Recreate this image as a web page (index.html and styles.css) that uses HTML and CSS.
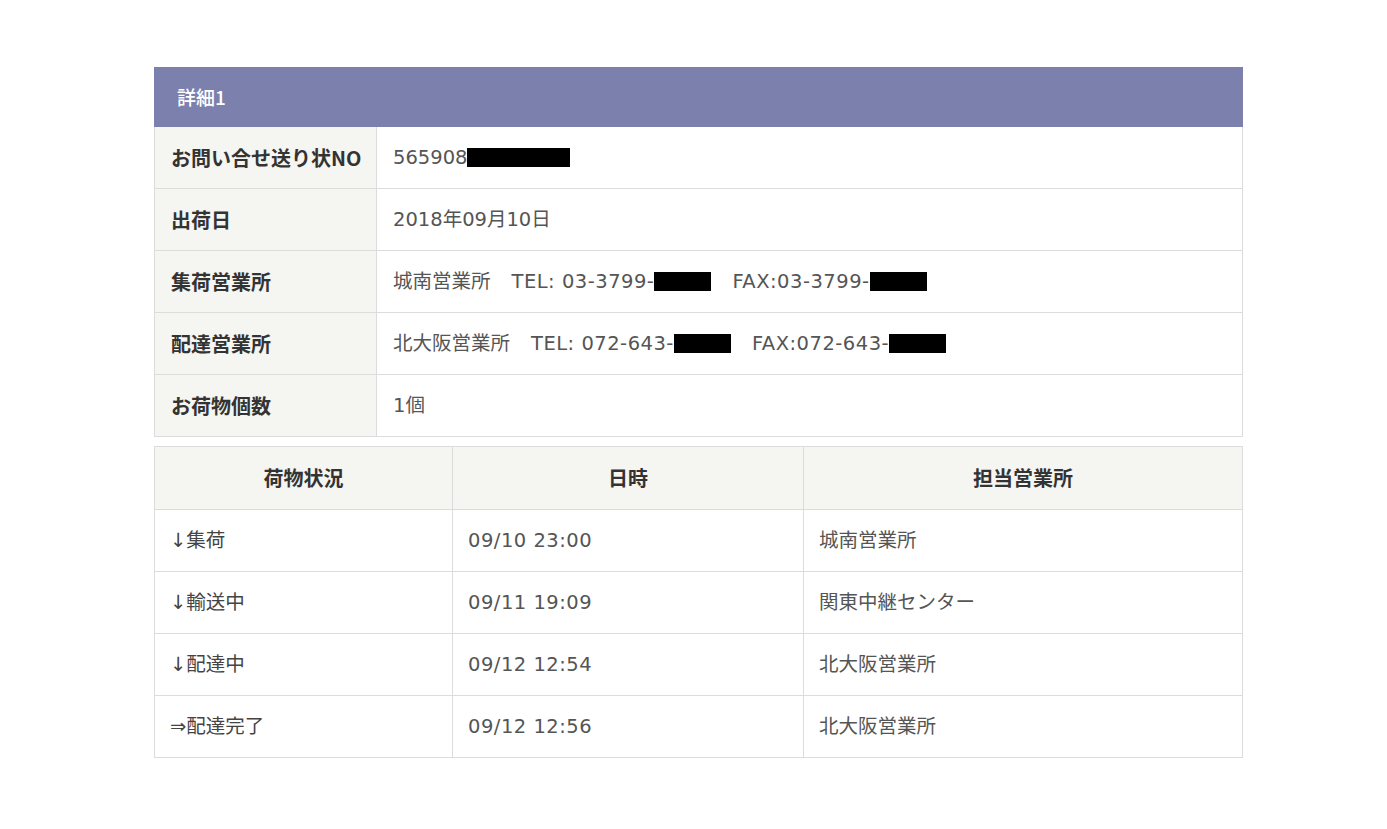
FILE: index.html
```html
<!DOCTYPE html>
<html lang="ja">
<head>
<meta charset="utf-8">
<title>詳細1</title>
<link rel="stylesheet" href="styles.css">
</head>
<body>
<div class="page">
  <table class="detail">
    <colgroup><col class="c-label"><col></colgroup>
    <thead>
      <tr><th colspan="2" class="title">詳細1</th></tr>
    </thead>
    <tbody>
      <tr><th>お問い合せ送り状NO</th><td>565908<span class="redact r1"></span></td></tr>
      <tr><th>出荷日</th><td>2018年09月10日</td></tr>
      <tr><th>集荷営業所</th><td>城南営業所<span class="sp"></span><span class="ls">TEL: 03-3799-</span><span class="redact r2"></span><span class="sp"></span><span class="ls">FAX:03-3799-</span><span class="redact r2"></span></td></tr>
      <tr><th>配達営業所</th><td>北大阪営業所<span class="sp"></span><span class="ls">TEL: 072-643-</span><span class="redact r2"></span><span class="sp"></span><span class="ls">FAX:072-643-</span><span class="redact r2"></span></td></tr>
      <tr><th>お荷物個数</th><td>1個</td></tr>
    </tbody>
  </table>
  <table class="status">
    <colgroup><col class="s1"><col class="s2"><col></colgroup>
    <thead>
      <tr><th>荷物状況</th><th>日時</th><th>担当営業所</th></tr>
    </thead>
    <tbody>
      <tr><td>↓集荷</td><td class="num">09/10 23:00</td><td>城南営業所</td></tr>
      <tr><td>↓輸送中</td><td class="num">09/11 19:09</td><td>関東中継センター</td></tr>
      <tr><td>↓配達中</td><td class="num">09/12 12:54</td><td>北大阪営業所</td></tr>
      <tr><td>⇒配達完了</td><td class="num">09/12 12:56</td><td>北大阪営業所</td></tr>
    </tbody>
  </table>
</div>
</body>
</html>
```
FILE: styles.css
```css
html, body {
  margin: 0;
  padding: 0;
  background: #ffffff;
}
body {
  font-family: "DejaVu Sans", "Noto Sans CJK JP", sans-serif;
  font-size: 19.5px;
  line-height: 22px;
  color: #555555;
}
.page {
  padding: 67px 0 0 154px;
}
table {
  border-collapse: collapse;
  table-layout: fixed;
  width: 1089px;
}
th, td {
  border: 1px solid #dcdcdc;
  text-align: left;
  vertical-align: middle;
  padding: 0 0 0 16px;
  white-space: nowrap;
  line-height: 22px;
}
.detail .c-label { width: 222px; }
.detail .title {
  background: #7b80ad;
  color: #ffffff;
  height: 58px;
  font-family: "Noto Sans CJK JP", sans-serif;
  font-size: 19px;
  font-weight: 500;
  padding: 0 0 0 22px;
  border-color: #7b80ad;
}
.detail tbody th {
  background: #f5f5f1;
  color: #333333;
  font-family: "Noto Sans CJK JP", sans-serif;
  font-weight: 700;
  font-size: 20px;
  height: 61px;
}
.detail tbody td {
  height: 61px;
}
.ls {
  letter-spacing: 0.5px;
}
.redact {
  display: inline-block;
  background: #000;
  height: 19px;
  vertical-align: -3px;
}
.r1 { width: 103px; }
.r2 { width: 57px; }
.sp { display: inline-block; width: 21px; }
.status {
  margin-top: 9px;
}
.status .s1 { width: 298px; }
.status .s2 { width: 351px; }
.status thead th {
  background: #f5f5f1;
  color: #333333;
  text-align: center;
  font-family: "Noto Sans CJK JP", sans-serif;
  font-weight: 700;
  font-size: 20px;
  height: 62px;
  padding: 0;
}
.status tbody td {
  height: 61px;
  padding-left: 15px;
}
.status tbody td:first-child {
  color: #444444;
}
.num {
  letter-spacing: 0.5px;
}
```
